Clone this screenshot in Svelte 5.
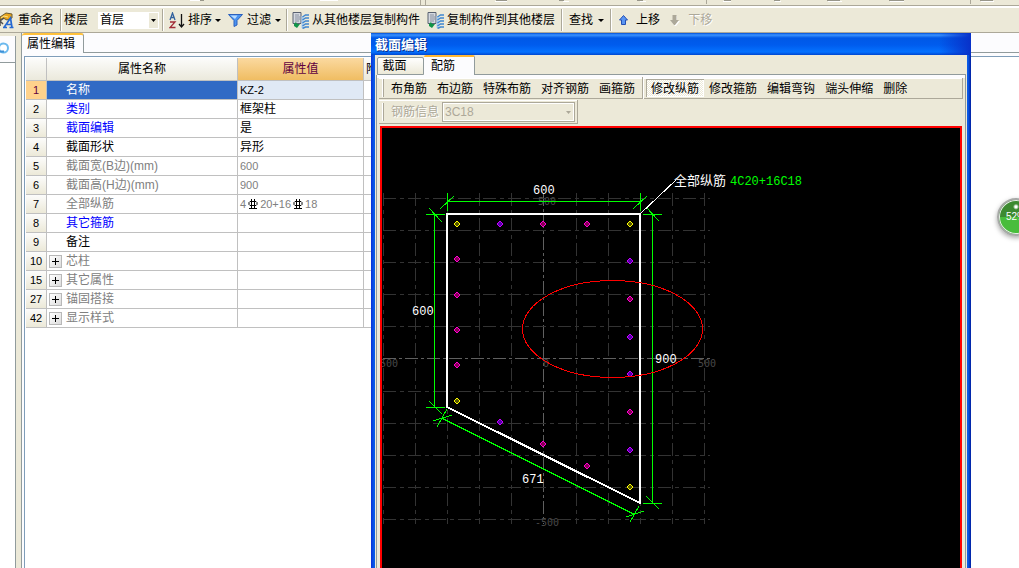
<script>
    const rows = [
        { no: 1, name: '名称', value: 'KZ-2', kind: 'selected' },
        { no: 2, name: '类别', value: '框架柱', kind: 'link' },
        { no: 3, name: '截面编辑', value: '是', kind: 'link' },
        { no: 4, name: '截面形状', value: '异形', kind: '' },
        { no: 5, name: '截面宽(B边)(mm)', value: '600', kind: 'muted' },
        { no: 6, name: '截面高(H边)(mm)', value: '900', kind: 'muted' },
        { no: 7, name: '全部纵筋', bars: ['4', '20+16', '18'], kind: 'muted' },
        { no: 8, name: '其它箍筋', value: '', kind: 'link' },
        { no: 9, name: '备注', value: '', kind: '' },
        { no: 10, name: '芯柱', value: '', kind: 'muted', group: true },
        { no: 15, name: '其它属性', value: '', kind: 'muted', group: true },
        { no: 27, name: '锚固搭接', value: '', kind: 'muted', group: true },
        { no: 42, name: '显示样式', value: '', kind: 'muted', group: true }
    ];

    const layoutTools = ['布角筋', '布边筋', '特殊布筋', '对齐钢筋', '画箍筋'];
    const editTools = ['修改纵筋', '修改箍筋', '编辑弯钩', '端头伸缩', '删除'];
    let activeTool = $state('修改纵筋');

    // drawing units: the origin is the centre of the section grid
    const gridX = [-160, -128, -96, -64, -32, 0, 33, 65, 97, 129, 161];
    const gridY = [-160, -128, -96, -64, -32, 0, 33, 65, 97, 129, 161];

    const cornerBars = [[-86, -134], [87, -134], [-86, 43], [87, 129]];
    const sideBars = [
        [-43, -134, true], [0, -134], [44, -134],
        [-86, -99], [-86, -63], [-86, -28], [-86, 7],
        [87, -97, true], [87, -59], [87, -21, true], [87, 16, true], [87, 54], [87, 92, true],
        [-43, 64, true], [0, 86], [44, 108]
    ];
</script>

{#snippet copyIcon()}
    <svg class="icon" width="17" height="17" viewBox="0 0 17 17">
        <path d="M1 .5h8v11H1z" fill="#d4d8df" stroke="#596170" />
        <path d="M3 3h4M3 5h5M3 7h5M3 9h4" stroke="#8890a0" />
        <path d="M10.5 4v12" stroke="#a8cdf0" stroke-width="2" />
        <path d="M10.500 5l3-2H17M10.500 8l3-2H17M10.500 11l3-2H17M10.500 14l3-2H17M10.500 16.500l3-1.500H17" stroke="#3f86d0" stroke-width="1.5" fill="none" />
        <path d="M2 12l2-2 1 2h3l-3 4-3-2z" fill="#129448" />
    </svg>
{/snippet}

{#snippet rebarSign()}
    <svg class="rebar" width="10" height="10" viewBox="0 0 10 10" role="img" aria-label="C">
        <path d="M2 2.500h6l1 1v2l-1 1H2l-1-1v-2zM3.500 0v9M6.500 0v9M1 9.500h8" fill="none" stroke="#000" />
    </svg>
{/snippet}

<div class="app">
    <div class="upper-bar">
        <svg width="1019" height="5" viewBox="0 0 1019 5">
            <path d="M420.5 0v5M425.5 0v5M706.5 0v4M970.5 0v4" stroke="#aca899" />
            <path d="M190 .5h14M320 .5h18M495 1.500h12M563 1.500h6M640 1.500h6M723 1.500h8M775 1.500h6M828 1.500h14M890 1.500h14M981 1.500h13" stroke="#fff" />
            <path d="M200 .5h4M496 .5h11M559 .5h5M637 .5h6M724 .5h7M774 .5h6M827 .5h13M889 .5h15M980 .5h13" stroke="#98968a" />
        </svg>
    </div>
    <div class="toolbar">
        <button class="tool rename">
            <svg class="icon" width="14" height="17" viewBox="0 0 14 17">
                <path d="M0 5l6-4 6 1v4L7 8 3 6l-3 2z" fill="#e9a51c" stroke="#6b5a31" />
                <path d="M1 6l3-2 4 1" stroke="#ffe68a" fill="none" />
                <path d="M0 9l4-3M0 14V9l3 3" stroke="#505050" fill="none" stroke-width="1.5" />
                <path d="M4 15.500L10.500 6l1.500 9.500M7 12.500h5M3 15.500h4M9.500 15.500h4" stroke="#2468d2" stroke-width="1.700" fill="none" />
            </svg>
            重命名
        </button>
        <i class="sep"></i>
        <label class="floor">
            <span>楼层</span>
            <select><option>首层</option></select>
        </label>
        <i class="sep"></i>
        <button class="tool sort">
            <svg class="icon" width="16" height="17" viewBox="0 0 16 17">
                <path d="M1 8l2.500-7L6 8M2 5.500h3" fill="none" stroke="#31619e" stroke-width="1.300" />
                <path d="M1 10h5l-5 5.500h5.500" fill="none" stroke="#a12b35" stroke-width="1.300" />
                <path d="M12.500 2v13M10 12l2.500 3 2.500-3" fill="none" stroke="#111" stroke-width="1.300" />
            </svg>
            排序
            <i class="caret"></i>
        </button>
        <button class="tool filter">
            <svg class="icon" width="15" height="14" viewBox="0 0 15 14">
                <path d="M.5 1.500h14L9 7.500V12l-3 1.500v-6z" fill="#4a93f0" stroke="#2c61bd" />
                <path d="M2.500 2.500h7L7 6z" fill="#b9dcff" />
            </svg>
            过滤
            <i class="caret"></i>
        </button>
        <i class="sep"></i>
        <button class="tool copy">{@render copyIcon()}从其他楼层复制构件</button>
        <button class="tool copy">{@render copyIcon()}复制构件到其他楼层</button>
        <i class="sep"></i>
        <button class="tool find">查找<i class="caret"></i></button>
        <i class="sep"></i>
        <button class="tool move">
            <svg class="icon" width="9" height="10" viewBox="0 0 9 10">
                <path d="M4.500 .5l4 4.500H6.500v4.500h-4V5H.5z" fill="#5b96f2" stroke="#2450b4" />
            </svg>
            上移
        </button>
        <button class="tool move" disabled>
            <svg class="icon" width="10" height="11" viewBox="0 0 10 11">
                <path d="M3 1h4v5h3l-4 5H5L1 6h2z" fill="#fff" />
                <path d="M2.500 0h4v5H9l-4 5H4L0 5h2.500z" fill="#aca899" />
            </svg>
            下移
        </button>
    </div>

    <div class="workspace">
        <aside class="side">
            <div class="side-tab">
                <svg width="10" height="14" viewBox="0 0 10 14">
                    <circle cx="3.500" cy="7" r="4.500" fill="#fff" stroke="#6bb9ee" stroke-width="2" />
                    <path d="M0 10.500h4" stroke="#3d8fd6" stroke-width="2" />
                </svg>
            </div>
            <div class="side-body"></div>
        </aside>
        <main class="panel">
            <div class="panel-tabs">
                <button class="panel-tab">属性编辑</button>
                <div class="tab-rest"></div>
            </div>
            <div class="sheet">
                <table>
                    <colgroup><col class="c-no" /><col class="c-name" /><col class="c-value" /><col class="c-extra" /></colgroup>
                    <thead>
                        <tr><th></th><th>属性名称</th><th class="hot">属性值</th><th class="extra">附</th></tr>
                    </thead>
                    <tbody>
                        {#each rows as row (row.no)}
                            <tr class={row.kind}>
                                <th scope="row">{row.no}</th>
                                <td class="name">
                                    <div class="name-box">
                                        {#if row.group}
                                            <button class="expand" aria-label="展开"></button>
                                        {:else}
                                            <span></span>
                                        {/if}
                                        <span>{row.name}</span>
                                    </div>
                                </td>
                                <td class="value">
                                    {#if row.bars}
                                        <span class="bars">
                                            {row.bars[0]}{@render rebarSign()}{row.bars[1]}{@render rebarSign()}{row.bars[2]}
                                        </span>
                                    {:else}
                                        {row.value}
                                    {/if}
                                </td>
                                <td></td>
                            </tr>
                        {/each}
                    </tbody>
                </table>
            </div>
        </main>

        <section class="dialog">
            <h1>截面编辑</h1>
            <div class="dialog-body">
                <div class="tabs">
                    <button class="tab">截面</button>
                    <button class="tab current">配筋</button>
                    <div class="tabs-rest"></div>
                </div>
                <div class="page">
                    <div class="tools">
                        <i class="grip"></i>
                        {#each layoutTools as tool}
                            <button class:pressed={tool === activeTool} onclick={() => (activeTool = tool)}>{tool}</button>
                        {/each}
                        <i class="sep"></i>
                        {#each editTools as tool}
                            <button class:pressed={tool === activeTool} onclick={() => (activeTool = tool)}>{tool}</button>
                        {/each}
                    </div>
                    <div class="tools info">
                        <i class="grip"></i>
                        <label for="rebar-info">钢筋信息</label>
                        <select id="rebar-info" disabled><option>3C18</option></select>
                    </div>
                    <div class="canvas">
                        <svg width="578" height="440" viewBox="-161 -230 578 440">
                            <g class="grid">
                                {#each gridX as x}
                                    <path class:axis={x === 0} d="M{x + 0.5} -165V166" />
                                {/each}
                                {#each gridY as y}
                                    <path class:axis={y === 0} d="M-160 {y + 0.5}H167" />
                                {/each}
                            </g>
                            <g class="scale">
                                <text x="-5" y="-153">500</text>
                                <text x="0" y="9">0</text>
                                <text x="155" y="9">500</text>
                                <text x="-169" y="9">-500</text>
                                <text x="-8" y="168">-500</text>
                            </g>
                            <g class="dims">
                                <path d="M-96 -156.500H97M-95.500 -165v18M97.500 -165v18M-103 -149L-89 -162M90 -149L104 -162" />
                                <path d="M-108.500 -144V49M-117 -143.500h19M-117 49.500h19M-114 -150L-101 -136M-114 43L-101 56" />
                                <path d="M109.500 -144V145M100 -143.500h19M100 145.500h19M103 -151L116 -137M103 138L116 151" />
                                <path d="M-100.500 60.500L91.500 156.500M-96 51L-106 69M-110 63L-91 57M96 148L87 164M83 159L101 153" />
                            </g>
                            <path class="outline" d="M-96 -144H97V145L-96 49Z" />
                            <g class="bars-corner">
                                {#each cornerBars as [x, y]}
                                    <path d="M{x - 3} {y}l3 -3l3 3l-3 3z" />
                                {/each}
                            </g>
                            <g class="bars-side">
                                {#each sideBars as [x, y, violet]}
                                    <path class:violet d="M{x - 3} {y}l3 -3l3 3l-3 3z" />
                                {/each}
                            </g>
                            <ellipse class="mark" cx="69.500" cy="-29" rx="90" ry="48.500" />
                            <path class="leader" d="M97 -144L133 -178" />
                            <g class="labels">
                                <text x="-10" y="-164">600</text>
                                <text x="-131" y="-43">600</text>
                                <text x="112" y="5">900</text>
                                <text x="-21" y="125">671</text>
                                <text class="cjk" x="131" y="-173">全部纵筋</text>
                                <text class="green" x="187" y="-173">4C20+16C18</text>
                            </g>
                        </svg>
                    </div>
                </div>
            </div>
        </section>
        <div class="badge"><span>52%</span></div>
    </div>
</div>

<style>
    :global(body) {
        background: #fff;
    }

    .app {
        display: flex;
        flex-direction: column;
        height: 100vh;
        overflow: hidden;
        font: 12px/16px 'Liberation Sans', 'Noto Sans CJK SC', sans-serif;
        color: #000;
    }

    button,
    select {
        font: inherit;
        color: inherit;
        margin: 0;
        padding: 0;
        border: 0;
        border-radius: 0;
        background: none;
        white-space: nowrap;
    }

    .icon {
        flex: none;
    }

    .upper-bar {
        flex: none;
        height: 5px;
        overflow: hidden;
        background: #ece9d8;
        border-bottom: 1px solid #aca899;
    }

    .upper-bar svg {
        display: block;
    }

    .toolbar {
        flex: none;
        display: flex;
        align-items: center;
        height: 24px;
        background: #ece9d8;
        border-top: 2px solid #fff;
        border-bottom: 1px solid #aca899;
        white-space: nowrap;
    }

    .tool {
        display: flex;
        align-items: center;
        gap: 4px;
        padding: 0 4px;
    }

    .tool.rename {
        padding-left: 0;
    }

    .tool.sort {
        gap: 3px;
        padding: 0 3px;
    }

    .tool.filter {
        padding-right: 3px;
    }

    .tool.copy {
        gap: 3px;
        padding: 0 3px 0 2px;
    }

    .tool.copy + .tool.copy {
        padding: 0 4px;
    }

    .tool.move {
        gap: 8px;
        padding: 0 5px;
    }

    .tool:disabled {
        color: #aca899;
        text-shadow: 1px 1px #fff;
    }

    .caret {
        width: 0;
        border: 3px solid transparent;
        border-top-color: #000;
        border-bottom: 0;
    }

    .sep {
        flex: none;
        width: 1px;
        height: 22px;
        margin: 0 2px;
        background: #aca899;
        border-right: 1px solid #fff;
    }

    .floor {
        display: flex;
        align-items: center;
        gap: 10px;
        padding-right: 1px;
    }

    .floor select,
    .info select {
        appearance: none;
        height: 17px;
        padding-left: 2px;
        line-height: 16px;
        background: url("data:image/svg+xml,%3Csvg xmlns='http://www.w3.org/2000/svg' width='9' height='15'%3E%3Cpath d='M0 0h9v15H0z' fill='%23ece9d8'/%3E%3Cpath d='M2 6h5L4.500 9z'/%3E%3C/svg%3E") no-repeat right 1px center #fff;
    }

    .floor select {
        width: 61px;
    }

    .tool.find {
        gap: 5px;
    }

    .workspace {
        position: relative;
        flex: 1;
        display: flex;
        min-height: 0;
        background: #ece9d8;
        overflow: hidden;
    }

    .side {
        flex: none;
        display: flex;
        flex-direction: column;
        width: 16px;
        padding: 3px 5px 0 0;
    }

    .side-tab {
        height: 25px;
        padding-top: 1px;
        background: #fcfcfe;
        border: 1px solid #919b9c;
        border-width: 0 1px 1px 0;
    }

    .side-tab svg {
        display: block;
        margin-top: 4px;
    }

    .side-body {
        flex: 1;
        background: #fff;
        border-right: 1px solid #919b9c;
    }

    .panel {
        flex: 1;
        display: flex;
        flex-direction: column;
        min-width: 0;
        background: #fcfcfe;
        border-left: 1px solid #919b9c;
    }

    .panel-tabs {
        display: flex;
        height: 20px;
    }

    .panel-tab {
        width: 62px;
        padding: 0 3px 1px 0;
        border-top: 2px solid #ffc13c;
        border-right: 1px solid #919b9c;
        border-radius: 3px 3px 0 0;
    }

    .tab-rest {
        flex: 1;
        border-bottom: 1px solid #919b9c;
    }

    .sheet {
        flex: 1;
        margin: 3px 0 0 2px;
        padding: 1px 0 0 1px;
        background: #fff;
        border: 1px solid #7f9db9;
        border-width: 1px 0 0 1px;
    }

    table {
        table-layout: fixed;
        width: 398px;
        border-collapse: separate;
        border-spacing: 0;
    }

    .c-no {
        width: 21px;
    }

    .c-name {
        width: 191px;
    }

    .c-value {
        width: 126px;
    }

    .c-extra {
        width: 60px;
    }

    th,
    td {
        height: 18px;
        padding: 0;
        border: 1px solid #c0c0c0;
        border-width: 0 1px 1px 0;
        font-weight: normal;
        line-height: 16px;
        white-space: nowrap;
    }

    thead th {
        height: 22px;
        background: linear-gradient(#fcfcfb, #ebe9dc);
    }

    thead .hot {
        color: #600040;
        background: linear-gradient(#fbd9a0, #f0bd62);
    }

    thead .extra {
        padding-left: 2px;
        text-align: left;
    }

    tbody th {
        background: linear-gradient(#fcfcfb, #ece9d8);
        font-size: 11px;
    }

    .name-box {
        display: grid;
        grid-template-columns: 13px auto;
        align-items: center;
        justify-content: start;
        gap: 4px;
        padding-left: 2px;
    }

    .value {
        padding-left: 2px;
    }

    .selected th {
        color: #600040;
        background: #ffd28c;
    }

    .selected .name {
        color: #fff;
        background: #316ac5;
    }

    .selected .value {
        background: #e0e9f5;
    }

    .link .name {
        color: #00f;
    }

    .muted td {
        color: #808080;
    }

    .muted .value,
    .selected .value {
        font-size: 11px;
    }

    .bars {
        display: flex;
        align-items: center;
        gap: 2px;
    }

    .expand {
        width: 13px;
        height: 13px;
        border: 1px solid #b8b8b8;
        background:
            linear-gradient(#000, #000) center / 7px 1px no-repeat,
            linear-gradient(#000, #000) center / 1px 7px no-repeat,
            linear-gradient(135deg, #fff, #dcdcdc);
    }

    .dialog {
        position: absolute;
        top: 0;
        right: 48px;
        bottom: 0;
        left: 371px;
        display: flex;
        flex-direction: column;
        overflow: hidden;
        background: linear-gradient(90deg, #0831d9, #0a5be8 3px, #0a5be8 calc(100% - 3px), #001ea0);
    }

    h1 {
        flex: none;
        height: 22px;
        margin: 0;
        padding-left: 4px;
        font-size: 13px;
        line-height: 24px;
        color: #fff;
        text-shadow: 1px 1px #0a2f8c;
        background:
            linear-gradient(90deg, transparent calc(100% - 32px), #0831c9),
            linear-gradient(#0050d8, #3a92ff 2px, #0058e6 5px, #005cee 12px, #0472ff 19px, #0046d0);
    }

    .dialog-body {
        flex: 1;
        display: flex;
        flex-direction: column;
        min-height: 0;
        margin: 0 4px;
        padding: 0 1px;
        background: #ece9d8;
    }

    .tabs {
        flex: none;
        display: flex;
        align-items: flex-end;
        height: 20px;
    }

    .tab {
        width: 47px;
        height: 18px;
        margin-left: 1px;
        padding-right: 12px;
        line-height: 16px;
        border: 1px solid #919b9c;
        border-radius: 2px 2px 0 0;
        background: linear-gradient(#fff, #ece9d8);
    }

    .tab.current {
        width: 51px;
        height: 20px;
        margin-left: 0;
        border-top: 2px solid #ffb833;
        border-bottom: 0;
        border-left: 0;
        background: #fcfcfe;
    }

    .tabs-rest {
        flex: 1;
        border-bottom: 1px solid #919b9c;
    }

    .page {
        flex: 1;
        display: flex;
        flex-direction: column;
        align-items: stretch;
        min-height: 0;
        padding: 3px 2px 0;
        background: linear-gradient(#fcfcfe 3px, #ece9d8 3px);
        border: 1px solid #919b9c;
        border-width: 0 1px 0 1px;
    }

    .tools {
        flex: none;
        display: flex;
        align-items: center;
        height: 20px;
        padding-left: 3px;
        border: 1px solid #aca899;
        border-width: 0 1px 1px 0;
        box-shadow: inset 0 1px #fff;
    }

    .tools button {
        height: 18px;
        padding: 2px 5px 0;
        line-height: 16px;
    }

    .tools button.pressed {
        box-shadow: inset 1px 1px #aca899, inset -1px -1px #fff;
        background: repeating-conic-gradient(#fff 0 25%, #ece9d8 0 50%) 0 0 / 2px 2px;
    }

    .grip {
        width: 1px;
        height: 18px;
        margin-right: 2px;
        border-right: 1px solid #aca899;
        background: #fff;
    }

    .info {
        align-self: flex-start;
        height: 23px;
        margin-top: 1px;
        padding-right: 2px;
        color: #aca899;
    }

    .info label {
        padding: 0 3px 0 5px;
        text-shadow: 1px 1px #fff;
    }

    .info select {
        width: 133px;
        height: 20px;
        border: 1px solid #aca899;
        box-shadow: inset 0 0 0 1px #fff;
        background-color: #ece9d8;
        background-image: url("data:image/svg+xml,%3Csvg xmlns='http://www.w3.org/2000/svg' width='9' height='15'%3E%3Cpath d='M2 7h5L4.500 10z' fill='%23aca899'/%3E%3C/svg%3E");
        opacity: 1;
    }

    .canvas {
        flex: 1;
        min-height: 0;
        margin: 2px 1px 0;
        overflow: hidden;
        background: #000;
        border: 2px solid #f00;
        border-bottom: 0;
    }

    .canvas svg {
        display: block;
    }

    .canvas path,
    .mark {
        fill: none;
        shape-rendering: crispEdges;
    }

    .grid path {
        stroke: #333;
        stroke-dasharray: 13 4 4 4;
    }

    .grid .axis {
        stroke: #606060;
        stroke-dasharray: 13 3 3 3;
    }

    .scale text {
        fill: #484848;
        font: 10px 'DejaVu Sans Mono', monospace;
    }

    .dims path {
        stroke: #0f0;
    }

    .canvas .outline {
        stroke: #fff;
        stroke-width: 2;
    }

    .canvas .bars-corner path {
        stroke: #ff0;
        fill: #550;
        shape-rendering: auto;
    }

    .canvas .bars-side path {
        stroke: #ff00d4;
        fill: #805;
        shape-rendering: auto;
    }

    .canvas .bars-side .violet {
        stroke: #c800ff;
        fill: #50a;
    }

    .canvas .mark {
        stroke: #f00;
    }

    .leader {
        stroke: #fff;
    }

    .labels text {
        fill: #fff;
        font: 12px 'Liberation Mono', monospace;
    }

    .labels .cjk {
        font: 13px 'Noto Sans CJK SC', sans-serif;
    }

    .labels .green {
        fill: #0f0;
    }

    .badge {
        position: absolute;
        top: 165px;
        right: -16px;
        width: 34px;
        height: 34px;
        border: 2px solid #a8aaa8;
        border-radius: 50%;
        background: radial-gradient(circle at 50% 20%, #fff 1px, transparent 3px), linear-gradient(#3c8a30 50%, #48bd3c 50%);
        box-shadow: inset 0 0 0 1px #e8f0e8, 0 2px 5px rgba(0, 0, 0, 0.35);
    }

    .badge span {
        display: block;
        padding-left: 7px;
        font-size: 10px;
        line-height: 34px;
        color: #fff;
    }
</style>
